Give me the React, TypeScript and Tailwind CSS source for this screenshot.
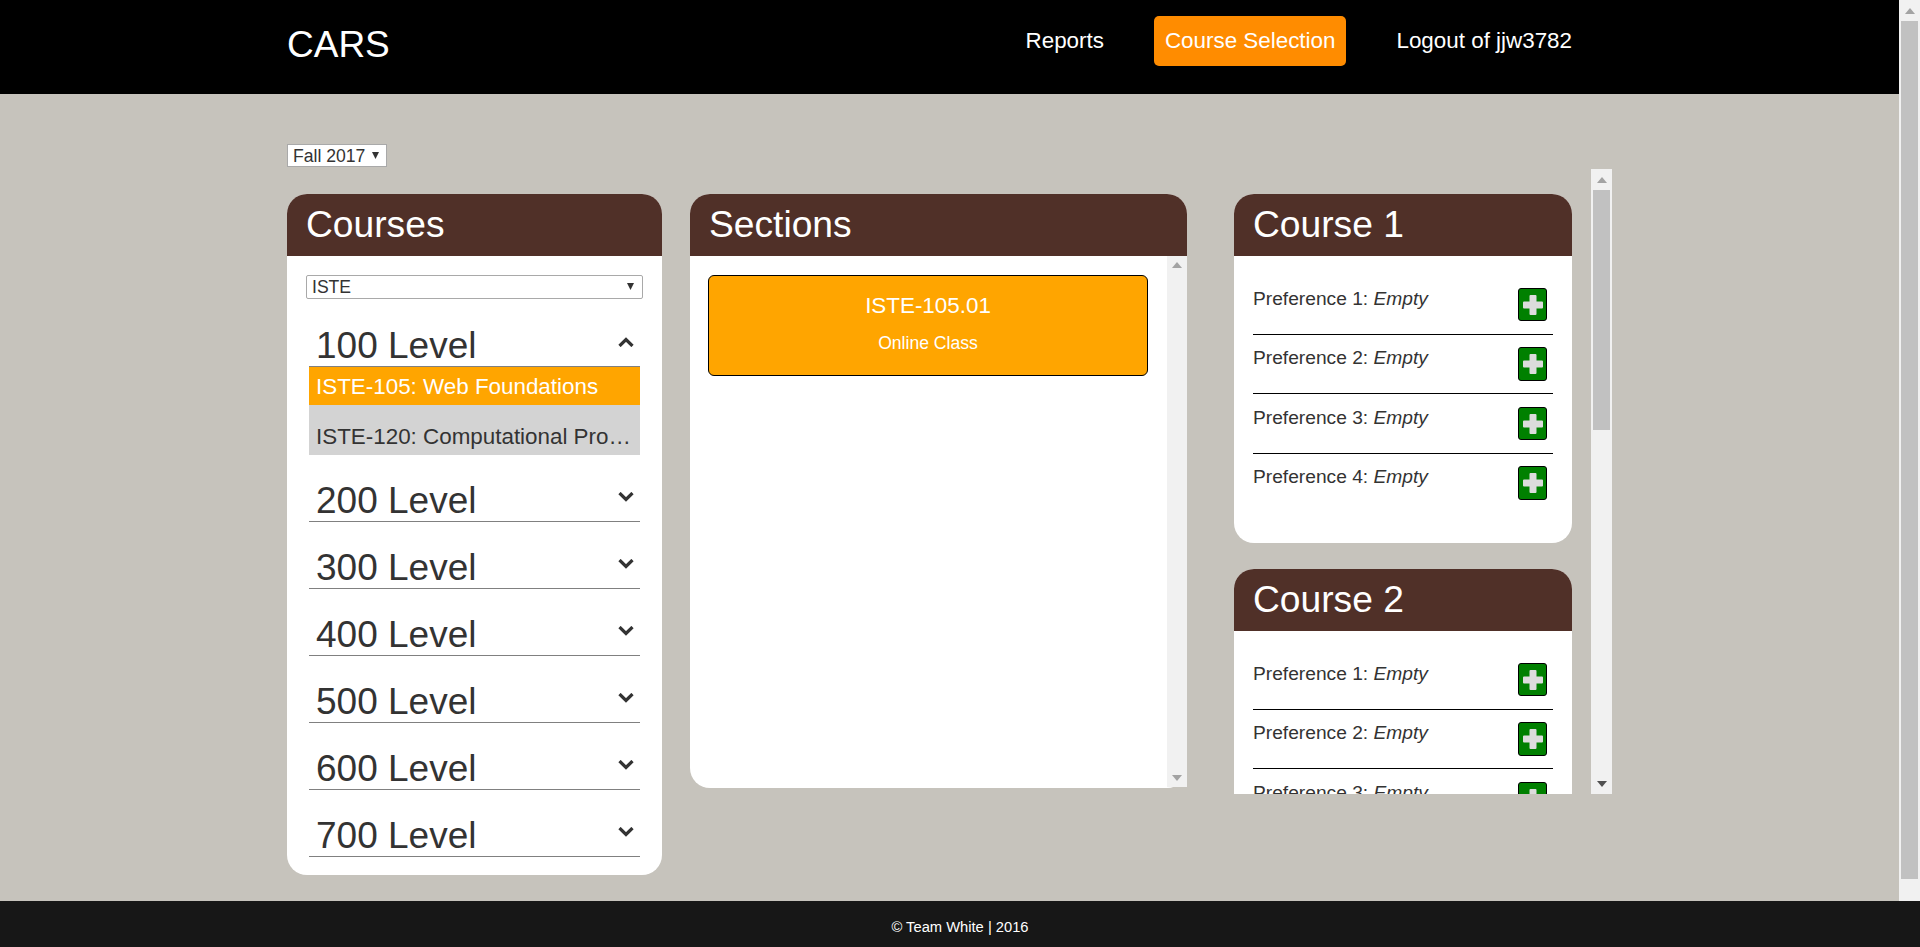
const levels = ["200 Level", "300 Level", "400 Level", "500 Level", "600 Level", "700 Level"];
const preferences = ["Preference 1:", "Preference 2:", "Preference 3:", "Preference 4:"];

function Arrow({ up, dark }: { up?: boolean; dark?: boolean }) {
  return (
    <svg width="10" height="6" viewBox="0 0 10 6" className={dark ? "fill-[#505050]" : "fill-[#a3a3a3]"}>
      <path d={up ? "M5 0 10 6H0Z" : "M0 0H10L5 6Z"} />
    </svg>
  );
}

function SelectArrow() {
  return (
    <svg width="7" height="7" viewBox="0 0 7 7" className="fill-[#333]">
      <path d="M0 0H7L3.500 7Z" />
    </svg>
  );
}

function Chevron({ up }: { up?: boolean }) {
  return (
    <svg width="16" height="10" viewBox="0 0 16 10" fill="none" stroke="#333" strokeWidth="3.2" className="mt-[12px]">
      <path d={up ? "M1.500 9 8 2.500 14.500 9" : "M1.500 1 8 7.500 14.500 1"} />
    </svg>
  );
}

function PlusButton() {
  return (
    <button className="w-[29px] h-[33.5px] shrink-0 flex items-center justify-center bg-[#008000] border border-black rounded-[3px]">
      <svg width="20" height="20" viewBox="0 0 20 20" className="fill-[#dcdcdc]">
        <path d="M7.5 0h5a1 1 0 0 1 1 1v5.500h5.500a1 1 0 0 1 1 1v5a1 1 0 0 1-1 1h-5.500V19a1 1 0 0 1-1 1h-5a1 1 0 0 1-1-1v-5.500H1a1 1 0 0 1-1-1v-5a1 1 0 0 1 1-1h5.500V1a1 1 0 0 1 1-1Z" />
      </svg>
    </button>
  );
}

function PanelHeader({ title }: { title: string }) {
  return (
    <div className="h-[62px] shrink-0 pl-[19px] bg-[#503028] text-white text-[37.2px] leading-[60px] rounded-t-[20px]">
      {title}
    </div>
  );
}

function CoursePanel({ title }: { title: string }) {
  return (
    <section className="w-[338px] h-[349px] shrink-0 bg-white rounded-[20px] text-[#333]">
      <PanelHeader title={title} />
      <div className="pt-[19.4px] px-[19px]">
        {preferences.map((pref, i) => (
          <div
            key={pref}
            className={
              i < preferences.length - 1
                ? "h-[59.5px] flex justify-between pr-[6px] pt-[12.500px] border-b border-black"
                : "h-[59.5px] flex justify-between pr-[6px] pt-[12.500px]"
            }
          >
            <p className="text-[19.2px] leading-[22px]">
              {pref} <em>Empty</em>
            </p>
            <PlusButton />
          </div>
        ))}
      </div>
    </section>
  );
}

function LevelRow({ label, open }: { label: string; open?: boolean }) {
  return (
    <div className="h-[42px] flex justify-between border-b border-[#808080] pl-[7px] pr-[6px] text-[37px] leading-[41px]">
      <span>{label}</span>
      <Chevron up={open} />
    </div>
  );
}

export default function App() {
  return (
    <div className="h-[947px] flex flex-col overflow-hidden bg-[#c6c3bc] [font-family:'Liberation_Sans',Arial,sans-serif]">
      <div className="flex-1 min-h-0 flex">
        <div className="flex-1 min-w-0">
          <header className="h-[94px] bg-black text-white flex items-start pl-[287px] pr-[316px]">
            <h1 className="text-[37px] leading-[90px]">CARS</h1>
            <nav className="ml-auto flex gap-[39px] pt-[16px] text-[22.4px] leading-[50px]">
              <a className="px-[11px]">Reports</a>
              <a className="px-[11px] bg-[#ff8c00] rounded-[5px]">Course Selection</a>
              <a className="px-[11px]">Logout of jjw3782</a>
            </nav>
          </header>

          <main className="pl-[287px] pt-[50px]">
            <div className="relative w-[100px] h-[23px]">
              <select className="w-full h-full appearance-none bg-white border border-[#a9a9a9] pl-[5px] text-[17.6px] leading-[20px] text-[#333]">
                <option>Fall 2017</option>
              </select>
              <span className="absolute right-[8px] top-[8px] flex pointer-events-none">
                <SelectArrow />
              </span>
            </div>

            <div className="flex items-start mt-[2px]">
              <section className="w-[375px] h-[681px] mt-[25px] shrink-0 bg-white rounded-[20px] text-[#333]">
                <PanelHeader title="Courses" />
                <div className="px-[19px] pt-[19px]">
                  <div className="relative h-[24px]">
                    <select className="w-full h-full appearance-none bg-white border border-[#a9a9a9] rounded-[2px] pl-[5px] text-[17.6px] leading-[20px]">
                      <option>ISTE</option>
                    </select>
                    <span className="absolute right-[9px] top-[8px] flex pointer-events-none">
                      <SelectArrow />
                    </span>
                  </div>
                  <div className="mx-[3px]">
                    <div className="mt-[26px]">
                      <LevelRow label="100 Level" open />
                      <div className="text-[22.4px]">
                        <div className="h-[38px] leading-[40px] px-[7px] bg-[#ffa500] text-white truncate">
                          ISTE-105: Web Foundations
                        </div>
                        <div className="h-[50px] pt-[12px] leading-[40px] px-[7px] bg-[#d3d3d3] truncate">
                          ISTE-120: Computational Problem Solving
                        </div>
                      </div>
                    </div>
                    {levels.map((level) => (
                      <div key={level} className="mt-[25px]">
                        <LevelRow label={level} />
                      </div>
                    ))}
                  </div>
                </div>
              </section>

              <section className="w-[497px] h-[594px] mt-[25px] ml-[28px] shrink-0 bg-white rounded-[20px] text-white">
                <PanelHeader title="Sections" />
                <div className="flex h-[531px]">
                  <div className="flex-1 pl-[18px] pr-[19px] pt-[19px]">
                    <div className="h-[101px] border border-black rounded-[6px] bg-[#ffa500] text-center">
                      <p className="text-[22.4px] leading-[26px] pt-[17px]">ISTE-105.01</p>
                      <p className="text-[17.6px] leading-[20px] pt-[14px]">Online Class</p>
                    </div>
                  </div>
                  <div className="w-[20px] bg-[#f1f1f1] flex flex-col items-center justify-between py-[6px]">
                    <Arrow up />
                    <Arrow />
                  </div>
                </div>
              </section>

              <div className="h-[625px] ml-[47px] flex shrink-0">
                <div className="w-[338px] h-full pt-[25px] flex flex-col gap-[26px] overflow-hidden">
                  <CoursePanel title="Course 1" />
                  <CoursePanel title="Course 2" />
                </div>
                <div className="w-[21px] ml-[19px] bg-[#f1f1f1] flex flex-col items-center">
                  <div className="h-[21px] flex items-center">
                    <Arrow up />
                  </div>
                  <div className="w-[17px] h-[240px] bg-[#c1c1c1]" />
                  <div className="mt-auto h-[21px] flex items-center">
                    <Arrow dark />
                  </div>
                </div>
              </div>
            </div>
          </main>
        </div>

        <div className="w-[21px] shrink-0 bg-[#f1f1f1] flex flex-col items-center">
          <div className="h-[21px] flex items-center">
            <Arrow up />
          </div>
          <div className="w-[17px] h-[858px] bg-[#c1c1c1]" />
        </div>
      </div>

      <footer className="h-[46px] shrink-0 bg-[#171717] text-white text-center text-[14.72px] leading-[52px]">
        © Team White | 2016
      </footer>
    </div>
  );
}
